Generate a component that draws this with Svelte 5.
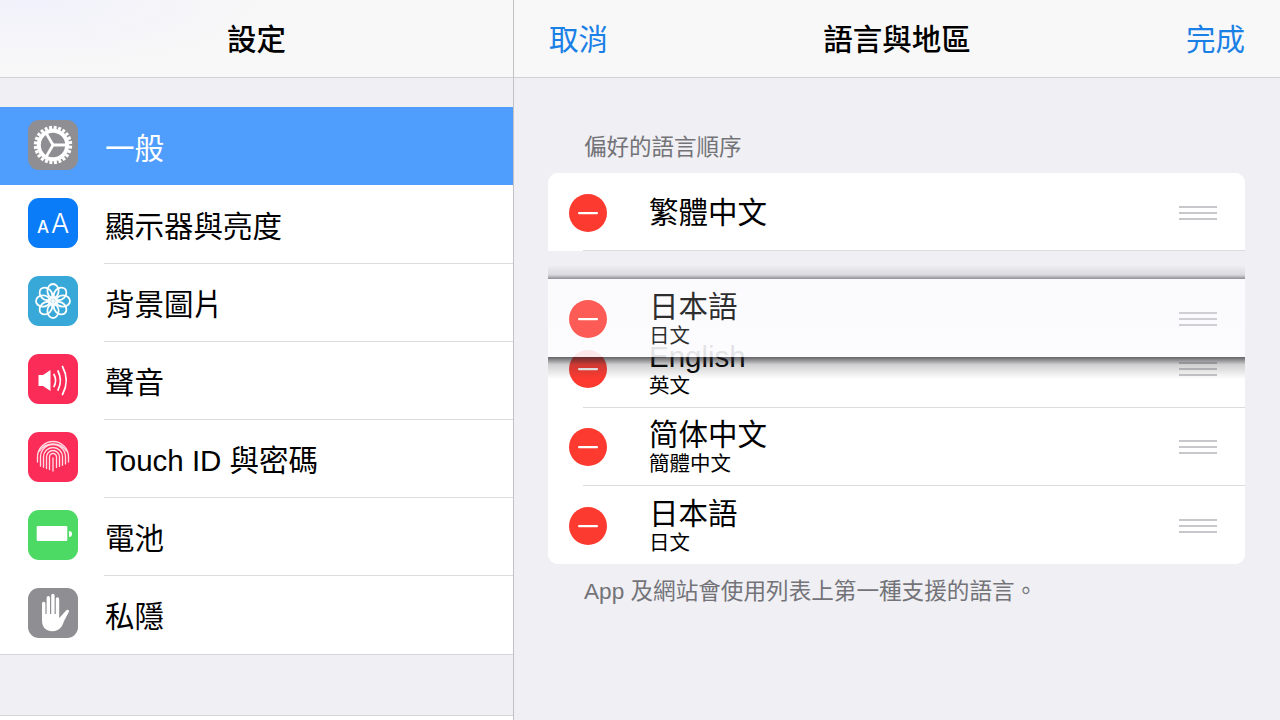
<script>
  const settings = [
    { id: 'gear', label: '一般', bg: '#8e8e93', active: true },
    { id: 'aa', label: '顯示器與亮度', bg: '#0a7cf8' },
    { id: 'flower', label: '背景圖片', bg: '#38a8d8' },
    { id: 'sound', label: '聲音', bg: '#fb2c57' },
    { id: 'touch', label: 'Touch ID 與密碼', bg: '#fb2c57' },
    { id: 'battery', label: '電池', bg: '#4cd964' },
    { id: 'hand', label: '私隱', bg: '#8e8e93' }
  ];
  const languages = [
    { main: 'English', sub: '英文' },
    { main: '简体中文', sub: '簡體中文' },
    { main: '日本語', sub: '日文' }
  ];
  const teeth = Array.from({ length: 24 }, (_, i) => i * 15);
  const petals = Array.from({ length: 8 }, (_, i) => i * 45);
  const spokes = [0, 120, 240];
  const domes = [3.5, 6.5, 9.5, 12.5, 15.5];
</script>

{#snippet minus()}
  <svg class="minus" viewBox="0 0 38 38" aria-hidden="true">
    <circle cx="19" cy="19" r="19" fill="#fd3a30" />
    <rect x="9" y="18" width="20" height="2.2" rx="1" fill="#fff" />
  </svg>
{/snippet}

{#snippet grip()}
  <div class="grip"><i></i><i></i><i></i></div>
{/snippet}

{#snippet icon(id)}
  {#if id === 'aa'}
    <span class="aa"><span class="small">A</span><span class="big">A</span></span>
  {:else}
    <svg viewBox="0 0 50 50" aria-hidden="true">
      {#if id === 'gear'}
        <g fill="none" stroke="#fff">
          <circle cx="25" cy="25" r="14.2" stroke-width="4" />
          {#each teeth as a}
            <line x1="25" y1="9" x2="25" y2="5.8" stroke-width="3" transform="rotate({a + 7} 25 25)" />
          {/each}
          {#each spokes as a}
            <line x1="25" y1="25" x2="39" y2="25" stroke-width="2.8" transform="rotate({a} 25 25)" />
          {/each}
        </g>
      {:else if id === 'flower'}
        <g fill="none" stroke="#fff" stroke-width="1.8">
          {#each petals as a}
            <ellipse cx="25" cy="15" rx="5.6" ry="7" transform="rotate({a} 25 25)" />
          {/each}
          <circle cx="25" cy="25" r="2" fill="#fff" stroke="none" />
        </g>
      {:else if id === 'sound'}
        <path d="M10.5 21h4.5l7.5-5v21l-7.5-5h-4.5z" fill="#fff" />
        <g fill="none" stroke="#fff" stroke-linecap="round" stroke-width="1.7">
          <path d="M26 20.5q3.2 6 0 12" />
          <path d="M30 17q4.8 9.500 0 19" />
          <path d="M34.500 12.500q7.500 14 0 28" />
        </g>
      {:else if id === 'touch'}
        <g fill="none" stroke="#ffdce3" stroke-width="1.35" stroke-linecap="round">
          {#each domes as r}
            <path d="M{25 - r} {r > 14 ? 30 : 39 - r * 0.4}V25a{r} {r} 0 0 1 {r * 2} 0v{r > 14 ? 5 : 12 - r * 0.4}" />
          {/each}
          <path d="M25 26v13" />
          <path d="M11.500 19a16.500 16.500 0 0 1 27 0" />
        </g>
      {:else if id === 'battery'}
        <rect x="8.700" y="16" width="30.600" height="15" rx="1" fill="#fff" />
        <path d="M41 21a3 3 0 0 1 0 6z" fill="#fff" />
      {:else if id === 'hand'}
        <path fill="#fff" d="M14 15.500a1.700 1.700 0 0 1 3.400 0V26h1.200V9.800a1.700 1.700 0 0 1 3.400 0V26h1.200V7.500a1.700 1.700 0 0 1 3.400 0V26h1.200V11a1.700 1.700 0 0 1 3.400 0v19l1.500-1.500 5.600-6.200c1.500-1.500 3.500 0 2.500 1.800l-5 9.500C34.700 38 31.500 43.300 24.500 43.300c-6.500 0-10.500-4-10.500-11z" />
      {/if}
    </svg>
  {/if}
{/snippet}

<div class="split">
  <aside class="master">
    <header class="nav"><h1>設定</h1></header>
    <ul class="settings">
      {#each settings as s}
        <li class:active={s.active}>
          <span class="tile" style:background={s.bg}>{@render icon(s.id)}</span>
          <span class="label">{s.label}</span>
        </li>
      {/each}
    </ul>
    <div class="next-group"></div>
  </aside>

  <main class="detail">
    <header class="nav between">
      <button>取消</button>
      <h1>語言與地區</h1>
      <button>完成</button>
    </header>
    <p class="section-title">偏好的語言順序</p>
    <div class="card">
      <div class="lang first">
        {@render minus()}
        <div class="names"><span class="main">繁體中文</span></div>
        {@render grip()}
      </div>
      <div class="slot"></div>
      {#each languages as l}
        <div class="lang">
          {@render minus()}
          <div class="names"><span class="main">{l.main}</span><span class="sub">{l.sub}</span></div>
          {@render grip()}
        </div>
      {/each}
      <div class="lang dragged">
        {@render minus()}
        <div class="names"><span class="main">日本語</span><span class="sub">日文</span></div>
        {@render grip()}
      </div>
    </div>
    <p class="footnote">App 及網站會使用列表上第一種支援的語言。</p>
  </main>
</div>

<style>
  :global(body) {
    margin: 0;
    background: #efeff4;
  }
  .split {
    display: flex;
    width: 1280px;
    height: 720px;
    overflow: hidden;
    font-family: "Liberation Sans", "Noto Sans CJK TC", sans-serif;
    color: #000;
  }
  .master {
    width: 513px;
    flex: none;
    border-right: 1px solid #c2c2c6;
    background: #efeff4;
  }
  .detail {
    flex: 1;
    min-width: 0;
    background: #efeff4;
  }
  .nav {
    height: 74px;
    padding-top: 3px;
    display: flex;
    align-items: center;
    justify-content: center;
    border-bottom: 1px solid #d2d2d6;
    background: #f8f8f8;
  }
  .master .nav {
    background: radial-gradient(ellipse 240px 70px at 30px 0, #f1f1fb, transparent), #f8f8f8;
  }
  .between {
    justify-content: space-between;
    padding: 3px 35px 0;
  }
  h1 {
    margin: 0;
    font-size: 29.5px;
    font-weight: 500;
    line-height: 1;
  }
  button {
    border: 0;
    padding: 0;
    background: none;
    font: inherit;
    font-size: 29.5px;
    line-height: 1;
    color: #1a80e6;
  }
  .settings {
    list-style: none;
    margin: 29px 0 0;
    padding: 0 0 1px;
    background: #fff;
    border-bottom: 1px solid #d6d6da;
  }
  .settings li {
    position: relative;
    height: 78px;
    display: flex;
    align-items: center;
    gap: 27px;
    padding: 0 0 2px 28px;
    box-sizing: border-box;
  }
  .settings li::after {
    content: "";
    position: absolute;
    left: 104px;
    right: 0;
    bottom: -1px;
    height: 1px;
    background: #dcdce0;
    z-index: 1;
  }
  .settings li:last-child::after,
  .settings li.active::after {
    display: none;
  }
  .settings li.active {
    background: #4f9dfd;
    color: #fff;
  }
  .tile {
    width: 50px;
    height: 50px;
    flex: none;
    border-radius: 11px;
    display: flex;
    align-items: center;
    justify-content: center;
    overflow: hidden;
  }
  .tile svg {
    width: 50px;
    height: 50px;
    display: block;
  }
  .label {
    font-size: 29.5px;
    line-height: 1.2;
    padding-top: 8px;
  }
  .aa {
    display: flex;
    align-items: baseline;
    gap: 2px;
    color: #fff;
    font-family: Inter, "Liberation Sans", sans-serif;
    font-weight: 300;
    line-height: 1;
  }
  .small {
    font-size: 17px;
    font-weight: 500;
  }
  .big {
    font-size: 27px;
  }
  .next-group {
    margin-top: 60px;
    height: 8px;
    background: #fff;
    border-top: 1px solid #d6d6da;
  }
  .section-title {
    margin: 0;
    padding: 55px 0 0 70px;
    height: 40px;
    font-size: 22.5px;
    line-height: 30px;
    color: #737378;
  }
  .card {
    position: relative;
    margin-left: 34px;
    width: 697px;
    border-radius: 10px;
    background: #fff;
  }
  .lang {
    position: relative;
    height: 78px;
    display: flex;
    align-items: center;
    padding: 2px 28px 0 21px;
    box-sizing: border-box;
    background: #fff;
  }
  .lang::after {
    content: "";
    position: absolute;
    left: 35px;
    right: 0;
    bottom: -1px;
    height: 1px;
    background: #dcdce0;
    z-index: 1;
  }
  .first::after {
    bottom: 0;
  }
  .lang:nth-last-child(2) {
    height: 79px;
    border-radius: 0 0 10px 10px;
  }
  .lang:nth-last-child(2)::after {
    display: none;
  }
  .first {
    border-radius: 10px 10px 0 0;
  }
  .slot {
    height: 78px;
    background: #efeff4;
  }
  .minus {
    width: 38px;
    height: 38px;
    flex: none;
    display: block;
  }
  .names {
    flex: 1;
    display: flex;
    flex-direction: column;
    margin-left: 42px;
    padding-top: 4px;
  }
  .first .names {
    padding-top: 0;
  }
  .main {
    font-size: 29.5px;
    line-height: 30px;
  }
  .sub {
    font-size: 20.5px;
    line-height: 28px;
  }
  .grip {
    width: 38px;
    display: flex;
    flex-direction: column;
    gap: 4px;
  }
  .grip i {
    display: block;
    height: 2px;
    background: #c7c7cc;
  }
  .dragged {
    position: absolute;
    top: 106px;
    left: 0;
    width: 697px;
    z-index: 2;
    background: rgba(252, 252, 255, 0.9);
  }
  .dragged > * {
    opacity: 0.82;
  }
  .dragged::before,
  .dragged::after {
    content: "";
    position: absolute;
    left: 0;
    right: 0;
    pointer-events: none;
  }
  .dragged::before {
    top: -14px;
    height: 14px;
    background: linear-gradient(to top, rgba(60, 60, 70, 0.55), rgba(60, 60, 70, 0.12) 30%, rgba(60, 60, 70, 0));
  }
  .dragged::after {
    top: 78px;
    bottom: auto;
    height: 22px;
    background: linear-gradient(to bottom, rgba(40, 40, 45, 0.72), rgba(60, 60, 65, 0.24) 35%, rgba(80, 80, 85, 0));
  }
  .footnote {
    margin: 0;
    padding: 13px 0 0 70px;
    font-size: 22.6px;
    line-height: 30px;
    color: #737378;
  }
</style>
